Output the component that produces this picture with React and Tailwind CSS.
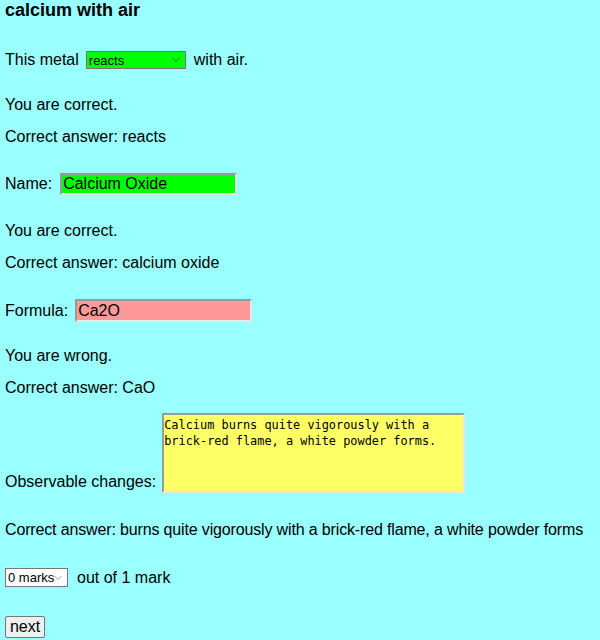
import React from "react";

function Chevron({ color = "#333" }) {
  return (
    <svg width="8" height="5" viewBox="0 0 8 5" className="absolute right-[5px] top-1/2 -translate-y-1/2">
      <path d="M0.5 0.5 L4 4 L7.5 0.5" fill="none" stroke={color} strokeWidth="1" />
    </svg>
  );
}

export default function App() {
  const font = { fontFamily: '"Liberation Sans", Arial, sans-serif' };
  return (
    <div className="min-h-[640px] w-[600px] bg-[#99ffff] px-[5px] text-[16px] text-black" style={font}>
      <div className="flex h-[21px] items-center text-[18px] font-bold leading-[21px]">calcium with air</div>

      <div className="mt-[30px] flex h-[18px] items-center leading-[18px]">
        <span>This metal</span>
        <div className="relative ml-[7px] h-[18px] w-[100px] border border-[#767676] bg-[#00ff00]">
          <span className="absolute left-[2px] top-[1px] text-[13px] leading-[15px]">reacts</span>
          <Chevron color="#3a7a3a" />
        </div>
        <span className="ml-[8px]">with air.</span>
      </div>

      <div className="mt-[27px] h-[18px] leading-[18px]">You are correct.</div>
      <div className="mt-[14px] h-[18px] leading-[18px]">Correct answer: reacts</div>

      <div className="mt-[27px] flex h-[22px] items-center leading-[18px]">
        <span>Name:</span>
        <div className="ml-[8px] flex h-[22px] w-[177px] items-center border-2 border-b-[#e6e6e6] border-l-[#9a9a9a] border-r-[#e6e6e6] border-t-[#9a9a9a] bg-[#00ff00] pl-[1px]">
          Calcium Oxide
        </div>
      </div>

      <div className="mt-[27px] h-[18px] leading-[18px]">You are correct.</div>
      <div className="mt-[14px] h-[18px] leading-[18px]">Correct answer: calcium oxide</div>

      <div className="mt-[27px] flex h-[23px] items-center leading-[18px]">
        <span>Formula:</span>
        <div className="ml-[7px] flex h-[23px] w-[177px] items-center border-2 border-b-[#e6e6e6] border-l-[#9a9a9a] border-r-[#e6e6e6] border-t-[#9a9a9a] bg-[#ff9999] pl-[1px]">
          Ca2O
        </div>
      </div>

      <div className="mt-[25px] h-[18px] leading-[18px]">You are wrong.</div>
      <div className="mt-[14px] h-[18px] leading-[18px]">Correct answer: CaO</div>

      <div className="mt-[16px] flex items-end">
        <span className="mb-[2px] h-[18px] whitespace-nowrap leading-[18px]">Observable changes:</span>
        <div
          className="ml-[6px] h-[80px] w-[303px] border-2 border-b-[#e6e6e6] border-l-[#9a9a9a] border-r-[#e6e6e6] border-t-[#9a9a9a] bg-[#ffff66] pl-0 pt-[2px] leading-[16px]"
          style={{ fontFamily: '"DejaVu Sans Mono", "Liberation Mono", monospace', fontSize: "11.9px" }}
        >
          Calcium burns quite vigorously with a<br />brick-red flame, a white powder forms.
        </div>
      </div>

      <div className="mt-[28px] h-[18px] whitespace-nowrap leading-[18px] tracking-[-0.15px]">
        Correct answer: burns quite vigorously with a brick-red flame, a white powder forms
      </div>

      <div className="mt-[29px] flex h-[19px] items-center leading-[18px]">
        <div className="relative h-[19px] w-[63px] border border-[#767676] bg-white">
          <span className="absolute left-[2px] top-[1px] text-[13px] leading-[15px]">0 marks</span>
          <Chevron color="#999" />
        </div>
        <span className="ml-[9px]">out of 1 mark</span>
      </div>

      <div className="mt-[29px]">
        <div className="flex h-[22px] w-[40px] items-center justify-center rounded-[2px] border border-[#767676] bg-[#efefef] leading-[18px]">
          next
        </div>
      </div>
    </div>
  );
}
